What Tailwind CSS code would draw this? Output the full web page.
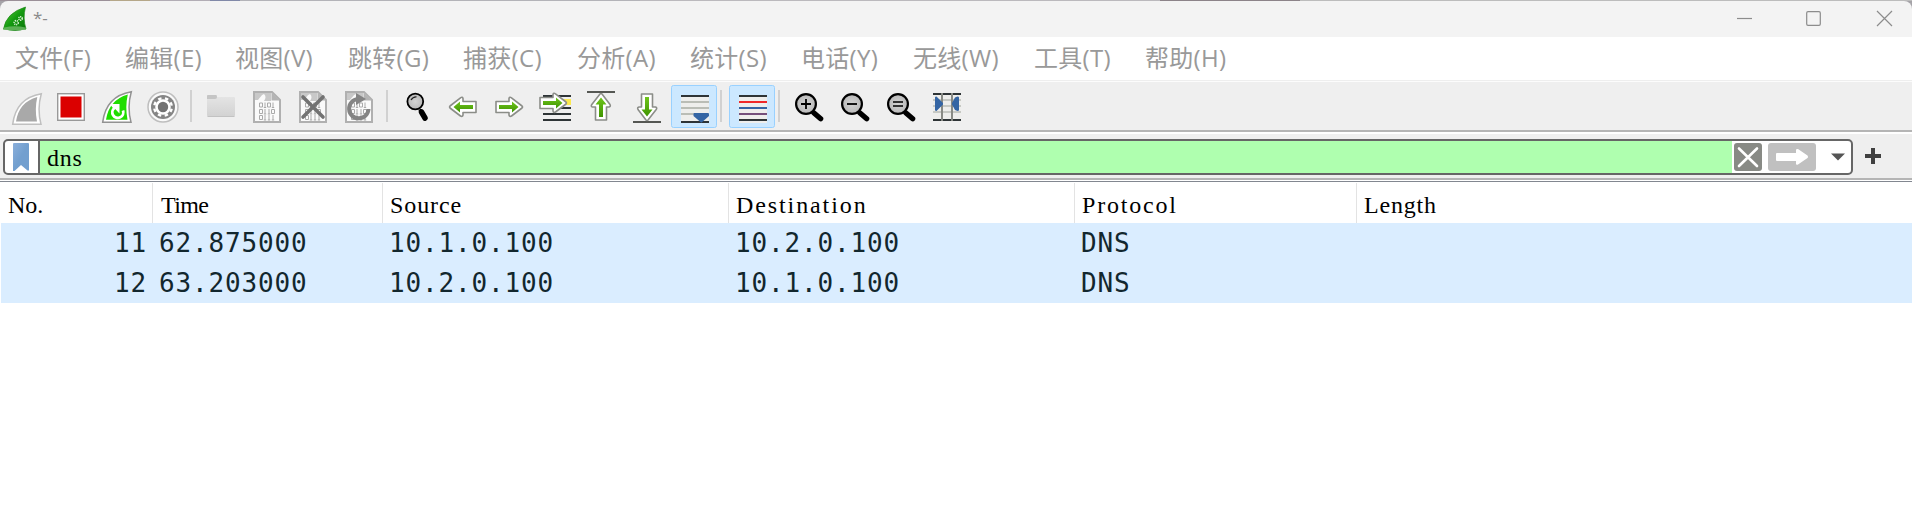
<!DOCTYPE html>
<html lang="zh-CN">
<head>
<meta charset="utf-8">
<title>*-</title>
<script src="https://cdn.jsdelivr.net/npm/@tailwindcss/browser@4"></script>
</head>
<body class="w-[1912px] h-[525px] overflow-hidden bg-white flex flex-col">
<svg class="absolute w-0 h-0">
  <defs>
    <linearGradient id="g" x1="0" y1="0" x2="0" y2="1"><stop offset="0" stop-color="#6fc51c"/><stop offset="1" stop-color="#3f9400"/></linearGradient>
    <linearGradient id="fin" x1="0" y1="0" x2="1" y2="1"><stop offset="0" stop-color="#5fd23c"/><stop offset=".5" stop-color="#149a10"/><stop offset="1" stop-color="#087508"/></linearGradient>
    <linearGradient id="fold" x1="0" y1="0" x2="0" y2="1"><stop offset="0" stop-color="#e6e6e6"/><stop offset="1" stop-color="#d2d2d2"/></linearGradient>
    <radialGradient id="lens"><stop offset="0" stop-color="#d4d4d4"/><stop offset="1" stop-color="#b9b9b9"/></radialGradient>
    <g id="doc">
      <path d="M1 1H19L27 9V31H1Z" fill="#fafafa" stroke="#b0b0b0" stroke-width="2"/>
      <path d="M2 2H18V10H11C13 7 13 5 11 3C8 4 7 7 5 9H2Z" fill="#c8c8c8"/>
      <path d="M18.500 1.500L26.500 9.500H18.500Z" fill="#b4b4b4"/>
      <g fill="none" stroke="#aaa" stroke-width="1">
        <path d="M6.500 12h3v4h-3zM14.500 12h3v4h-3zM6.500 18.500h3v4h-3zM18.500 18.500h3v4h-3zM6.500 24.500h3v4h-3z"/>
        <path d="M12 11.500v5M20 11.500v5M10.800 16.500h2.400M18.800 16.500h2.400M12 18v5M16 18v5M10.800 23h2.400M14.800 23h2.400M12 24v5M16 24v5M20 24v5M10.800 29h2.400M14.800 29h2.400M18.800 29h2.400"/>
      </g>
    </g>
    <g id="zoomer">
      <path d="M19 20L26 26" stroke="#000" stroke-width="5.200" stroke-linecap="round"/>
      <circle cx="11.300" cy="11.300" r="9.900" fill="url(#lens)" stroke="#000" stroke-width="2.200"/>
    </g>
  </defs>
</svg>

<!-- title bar -->
<header class="h-[37px] shrink-0 bg-[#a5a3a8]">
  <div class="h-px flex"><i class="w-[110px] bg-[#9b9098]"></i><i class="w-[40px] bg-[#b5a789]"></i><i class="w-[60px] bg-[#b2adb5]"></i><i class="w-[30px] bg-[#8189a8]"></i><i class="w-[400px] bg-[#b3b3b8]"></i><i class="w-[520px] bg-[#bbb9bd]"></i><i class="w-[140px] bg-[#8c8389]"></i><i class="grow bg-[#bcbcbc]"></i></div>
  <div class="h-[36px] bg-[#f3f3f3] rounded-t-lg flex items-center">
    <svg class="ml-0.5" width="26" height="28" viewBox="2 4 26 28">
      <path d="M3.500 28Q6 12 25.500 6Q22.500 17 26 28Q15 31 3.500 28Z" fill="url(#fin)" stroke="#1b8616" stroke-width=".7"/>
      <path d="M4 26.500Q15 24 25.500 26.500L26 29H3Z" fill="#76bd6e" opacity=".75"/>
      <g fill="none" stroke="#d5f0d0"><circle cx="16.200" cy="21.700" r="2" stroke-width="1.700" stroke-dasharray="1.100 .7"/><circle cx="20.500" cy="17.500" r="1.700" stroke-width="1.600" stroke-dasharray="1.100 .6"/></g>
    </svg>
    <span class="ml-[5px] -mt-1 text-[17px] leading-none text-[#8a8a8a] font-['Open_Sans',sans-serif]">*-</span>
    <svg class="ml-auto" width="212" height="36" viewBox="1700 1 212 36" fill="none" stroke="#8c8c8c" stroke-width="1.200">
      <path d="M1737 18.500h15"/><rect x="1806.700" y="11.700" width="13.600" height="13.600" rx="1.300"/><path d="M1877 11l15 15M1892 11l-15 15"/>
    </svg>
  </div>
</header>

<!-- menu bar -->
<nav class="h-[45px] shrink-0 bg-white border-b border-[#fcfcfc]">
  <div class="h-[44px] border-b border-[#eeeeee] pl-[15px] pb-px flex items-center text-[24px] leading-none tracking-[.3px] text-[#999] whitespace-nowrap font-['Open_Sans','Noto_Sans_CJK_SC',sans-serif]">
    <span class="w-[110px]">文件(F)</span><span class="w-[110px]">编辑(E)</span><span class="w-[113px]">视图(V)</span><span class="w-[115px]">跳转(G)</span><span class="w-[114px]">捕获(C)</span><span class="w-[113px]">分析(A)</span><span class="w-[111px]">统计(S)</span><span class="w-[112px]">电话(Y)</span><span class="w-[121px]">无线(W)</span><span class="w-[111px]">工具(T)</span><span>帮助(H)</span>
  </div>
</nav>

<!-- toolbar -->
<div class="h-[48px] shrink-0 bg-[#efefef] flex pl-0.5">
  <svg width="46" height="48" viewBox="2 82 46 48"><path d="M12.700 124.200Q16 98 41.300 93.700Q37 109 41 124.200Z" fill="#fff" stroke="#c0c0c0" stroke-width="1.500"/><path d="M16 121.500Q19 102 37.300 97Q34.500 109 37 121.500Z" fill="#a9a9a9"/></svg>
  <svg width="46" height="48" viewBox="48 82 46 48"><rect x="57.700" y="93.700" width="26.600" height="26.600" fill="#fff" stroke="#999" stroke-width="1.400"/><rect x="60.500" y="96.500" width="21" height="21" fill="#db0000"/></svg>
  <svg width="46" height="48" viewBox="94 82 46 48"><path d="M102.700 122.200Q106 96 131.300 91.700Q127 107 131 122.200Z" fill="#fff" stroke="#929292" stroke-width="1.500"/><path d="M106 119.800Q109 100 127.800 94.500Q125 107 127.500 119.800Z" fill="#1fdd00"/><path d="M123 110.500A5.500 5.500 0 1 1 114.500 108L112 104.500" fill="none" stroke="#fff" stroke-width="2.800"/><path d="M110.500 104H119.500V113.500Z" fill="#fff"/></svg>
  <svg width="46" height="48" viewBox="140 82 46 48"><circle cx="163" cy="107" r="15" fill="#fafafa" stroke="#bebebe" stroke-width="1.500"/><circle cx="163" cy="107" r="12" fill="#858585"/><circle cx="163" cy="107" r="8.800" fill="none" stroke="#fff" stroke-width="2.400" stroke-dasharray="3.456 3.456" transform="rotate(11 163 107)"/><circle cx="163" cy="107" r="6.500" fill="#737373" stroke="#fff" stroke-width="2.600"/></svg>
  <div class="w-3 flex items-center pl-1"><i class="w-[2px] h-8 bg-[#d1d1d1]"></i></div>
  <svg width="46" height="48" viewBox="198 82 46 48"><path d="M207 96q0-1 1-1h8q1 0 1 2h17q1 0 1 1v17q0 1.500-1.500 1.500h-25q-1.500 0-1.500-1.500z" fill="url(#fold)"/><path d="M207 96q0-1 1-1h8q1 0 1 2q0 2-2 2h-8z" fill="#c5c5c5"/><path d="M207.500 116.500h27" stroke="#c2c2c2"/></svg>
  <svg width="46" height="48" viewBox="244 82 46 48"><use href="#doc" x="253" y="91"/></svg>
  <svg width="46" height="48" viewBox="290 82 46 48"><use href="#doc" x="299" y="91"/><path d="M303 97l20 20M323 97l-20 20" stroke="#727272" stroke-width="3.600" stroke-linecap="round"/></svg>
  <svg width="46" height="48" viewBox="336 82 46 48"><use href="#doc" x="345" y="91"/><path d="M368.500 109A9.700 9.700 0 1 1 358 99" fill="none" stroke="#848484" stroke-width="4"/><path d="M356 93l10 6l-10 6z" fill="#848484"/></svg>
  <div class="w-3 flex items-center pl-1"><i class="w-[2px] h-8 bg-[#d1d1d1]"></i></div>
  <svg width="46" height="48" viewBox="394 82 46 48"><path d="M419.500 109.500l2 2" stroke="#000" stroke-width="3"/><path d="M421.500 112L425 118" stroke="#000" stroke-width="5.500" stroke-linecap="round"/><circle cx="415.300" cy="101.500" r="7.900" fill="url(#lens)" stroke="#000" stroke-width="1.800"/><path d="M411 100q2-3.500 5.500-3.200" stroke="#222" stroke-width="1.200" fill="none"/></svg>
  <svg width="46" height="48" viewBox="440 82 46 48"><g transform="translate(477 97) scale(-1 1)"><path d="M1 4.500H14V1.500Q14.500-.5 16.500 .8L27 9Q28 10 27 11L16.500 19Q14.500 20 14 18V15.500H1Z" fill="#fff" stroke="#8b8d88" stroke-width="1.600" stroke-linejoin="round"/><path d="M4 8H17V4.500L23.500 10L17 15.500V12H4Z" fill="url(#g)"/></g></svg>
  <svg width="46" height="48" viewBox="486 82 46 48"><g transform="translate(495 97)"><path d="M1 4.500H14V1.500Q14.500-.5 16.500 .8L27 9Q28 10 27 11L16.500 19Q14.500 20 14 18V15.500H1Z" fill="#fff" stroke="#8b8d88" stroke-width="1.600" stroke-linejoin="round"/><path d="M4 8H17V4.500L23.500 10L17 15.500V12H4Z" fill="url(#g)"/></g></svg>
  <svg width="46" height="48" viewBox="532 82 46 48"><path d="M563 99h8v6h-8z" fill="#fce94f"/><path d="M543 96h28M543 108h28M543 114h28M543 120h28" stroke="#2e3436" stroke-width="2"/><g transform="translate(539 93)"><path d="M1 4.500H14V1.500Q14.500-.5 16.500 .8L27 9Q28 10 27 11L16.500 19Q14.500 20 14 18V15.500H1Z" fill="#fff" stroke="#8b8d88" stroke-width="1.600" stroke-linejoin="round"/><path d="M4 8H17V4.500L23.500 10L17 15.500V12H4Z" fill="url(#g)"/></g></svg>
  <svg width="46" height="48" viewBox="578 82 46 48"><path d="M587 92h28" stroke="#555753" stroke-width="2"/><g transform="translate(591 121) rotate(-90)"><path d="M1 4.500H14V1.500Q14.500-.5 16.500 .8L27 9Q28 10 27 11L16.500 19Q14.500 20 14 18V15.500H1Z" fill="#fff" stroke="#8b8d88" stroke-width="1.600" stroke-linejoin="round"/></g><path d="M599 117V104.500H595.500L601 97.500L606.500 104.500H603V117Z" fill="url(#g)"/></svg>
  <svg width="46" height="48" viewBox="624 82 46 48"><path d="M633 122h28" stroke="#555753" stroke-width="2"/><g transform="translate(657 93) rotate(90)"><path d="M1 4.500H14V1.500Q14.500-.5 16.500 .8L27 9Q28 10 27 11L16.500 19Q14.500 20 14 18V15.500H1Z" fill="#fff" stroke="#8b8d88" stroke-width="1.600" stroke-linejoin="round"/></g><path d="M645 97V109.500H641.500L647 116.500L652.500 109.500H649V97Z" fill="url(#g)"/></svg>
  <svg width="47" height="48" viewBox="670 82 47 48"><rect x="671.500" y="85.500" width="45" height="42" rx="2" fill="#cce8ff" stroke="#99d1ff"/><path d="M681 95h28v28h-28z" fill="#eeeeec"/><path d="M681 96h28M681 122h28" stroke="#2e3436" stroke-width="2"/><path d="M681 102h28M681 108h28M681 114h28" stroke="#babdb6" stroke-width="2"/><path d="M694 113h14q1 0 1 1.500v1.500l-7.300 6.500h-.7l-7.500-6.500v-1.500q0-1.500.5-1.500z" fill="#3465a4"/></svg>
  <div class="w-[11px] flex items-center pl-[3px]"><i class="w-[2px] h-8 bg-[#d1d1d1]"></i></div>
  <svg width="47" height="48" viewBox="728 82 47 48"><rect x="729.500" y="85.500" width="45" height="42" rx="2" fill="#cce8ff" stroke="#99d1ff"/><path d="M739 95h28v28h-28z" fill="#eeeeec"/><path d="M739 96h28M739 120h28" stroke="#2e3436" stroke-width="2"/><path d="M739 102h28" stroke="#ef2929" stroke-width="2"/><path d="M739 108h28" stroke="#3465a4" stroke-width="2"/><path d="M739 114h28" stroke="#75507b" stroke-width="2"/></svg>
  <div class="w-[11px] flex items-center pl-[3px]"><i class="w-[2px] h-8 bg-[#d1d1d1]"></i></div>
  <svg width="46" height="48" viewBox="786 82 46 48"><use href="#zoomer" x="794.700" y="92.700"/><path d="M801 104h10M806 99v10" stroke="#000" stroke-width="1.800"/></svg>
  <svg width="46" height="48" viewBox="832 82 46 48"><use href="#zoomer" x="840.700" y="92.700"/><path d="M847 104h10" stroke="#000" stroke-width="1.800"/></svg>
  <svg width="46" height="48" viewBox="878 82 46 48"><use href="#zoomer" x="886.700" y="92.700"/><path d="M893 102h10M893 106h10" stroke="#000" stroke-width="1.700"/></svg>
  <svg width="46" height="48" viewBox="924 82 46 48"><path d="M933 93h28v28h-28z" fill="#eeeeec"/><path d="M933 100h28M933 106h28M933 112h28" stroke="#babdb6" stroke-width="1.700"/><path d="M933 94h28M933 120h28" stroke="#2e3436" stroke-width="2"/><path d="M942 93v28M952 93v28" stroke="#888a85" stroke-width="2"/><path d="M935 97.500q0-1 1.500-1l6.500 6.500v1.500l-6.500 6.500q-1.500 0-1.500-1zM959 97.500q0-1-1.500-1l-2.500 1l-3 5.500v1.500l3 5.500l2.500 1q1.500 0 1.500-1z" fill="#3465a4"/></svg>
</div>

<!-- display filter bar -->
<section class="h-[50px] shrink-0 bg-[#efefef] border-t-2 border-[#b5b5b5] border-b-2 flex">
  <div class="grow border-t-2 border-white flex items-center">
    <div class="ml-[3px] mt-px w-[1850px] h-[36px] rounded-[5px] border-2 border-[#666] bg-white flex items-center overflow-hidden">
      <svg class="ml-2 shrink-0" width="16" height="28" viewBox="0 0 16 28"><defs><linearGradient id="bm" x1="0" y1="0" x2="1" y2="1"><stop offset="0" stop-color="#8bafdb"/><stop offset=".5" stop-color="#729fcf"/></linearGradient></defs><path d="M0 1q0-1 1-1h14q1 0 1 1v26.500h-1.500L8 22L1.500 28H0z" fill="url(#bm)"/></svg>
      <div class="ml-[9px] w-[1694px] h-full border-l-2 border-[#666] bg-[#afffaf] flex items-center pl-[7px]"><span class="text-[24px] leading-none tracking-[.8px] text-black mt-[3px] font-['Liberation_Serif',serif]">dns</span></div>
      <svg class="shrink-0" width="119" height="32" viewBox="1731 141 119 32">
        <rect x="1733" y="143" width="28" height="28" rx="3" fill="#888a85"/><path d="M1738 148.500l18 17.500M1756 148.500l-18 17.500" stroke="#fff" stroke-width="2.600" stroke-linecap="round"/>
        <rect x="1767" y="143" width="48" height="28" rx="3" fill="#c0c0c0"/><path d="M1776 153h19v-3q0-1.500 2-1l9.500 6.500q1 1.500 0 2.500l-9.500 6.500q-2 1-2-1v-2.500h-19q-1 0-1-1v-6q0-1 1-1z" fill="#fff"/>
        <path d="M1830 153.500h14l-7 7z" fill="#555"/>
      </svg>
    </div>
    <svg class="ml-3" width="16" height="16" viewBox="0 0 16 16"><path d="M0 8h16M8 0v16" stroke="#404040" stroke-width="4"/></svg>
  </div>
</section>

<!-- packet list -->
<main class="mt-px border-t border-[#828790] grow">
  <div class="h-[41px] flex text-[24px] leading-none text-black font-['Liberation_Serif',serif]">
    <div class="w-[153px] mt-px border-r border-[#e3e3e3] pl-2 pt-[3px] flex items-center"><span>No.</span></div>
    <div class="w-[230px] mt-px border-r border-[#e3e3e3] pl-2 pt-[3px] flex items-center"><span class="tracking-[-.6px]">Time</span></div>
    <div class="w-[346px] mt-px border-r border-[#e3e3e3] pl-[7px] pt-[3px] flex items-center"><span class="tracking-[.9px]">Source</span></div>
    <div class="w-[346px] mt-px border-r border-[#e3e3e3] pl-[7px] pt-[3px] flex items-center"><span class="tracking-[1.9px]">Destination</span></div>
    <div class="w-[282px] mt-px border-r border-[#e3e3e3] pl-[7px] pt-[3px] flex items-center"><span class="tracking-[1.8px]">Protocol</span></div>
    <div class="mt-px pl-[7px] pt-[3px] flex items-center"><span class="tracking-[.8px]">Length</span></div>
  </div>
  <div class="ml-px bg-[#daedff] text-[26px] leading-[40px] tracking-[.85px] text-[#12272e] font-['DejaVu_Sans_Mono',monospace]">
    <div class="h-10 flex"><span class="w-[146px] text-right">11</span><span class="w-[230px] pl-3">62.875000</span><span class="w-[346px] pl-3">10.1.0.100</span><span class="w-[346px] pl-3">10.2.0.100</span><span class="pl-3">DNS</span></div>
    <div class="h-10 flex"><span class="w-[146px] text-right">12</span><span class="w-[230px] pl-3">63.203000</span><span class="w-[346px] pl-3">10.2.0.100</span><span class="w-[346px] pl-3">10.1.0.100</span><span class="pl-3">DNS</span></div>
  </div>
</main>
</body>
</html>
